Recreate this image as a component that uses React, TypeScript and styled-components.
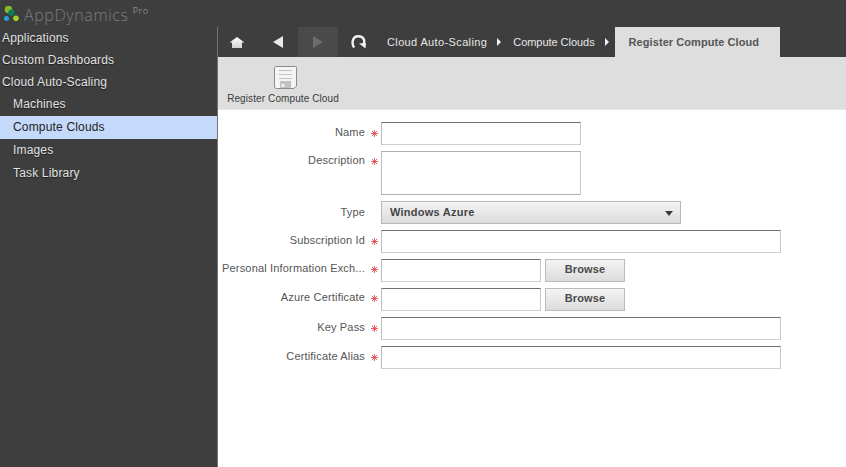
import type { ReactNode } from "react";
import styled, { createGlobalStyle } from "styled-components";

const GlobalStyle = createGlobalStyle`
  html, body {
    margin: 0;
    padding: 0;
    height: 100%;
    background: #ffffff;
  }
  #root {
    height: 100%;
  }
`;

const Page = styled.div`
  width: 846px;
  height: 467px;
  display: flex;
  flex-direction: column;
  overflow: hidden;
  font-family: "Liberation Sans", Arial, sans-serif;
  font-size: 11px;
`;

const TopBar = styled.header`
  height: 27px;
  flex-shrink: 0;
  background: #3e3e3e;
  display: flex;
  align-items: center;
  padding: 2px 0 0 4px;
  box-sizing: border-box;
`;

const LogoMarkBox = styled.span`
  display: block;
  height: 15px;
  margin-top: -3px;
`;

const LogoName = styled.span`
  margin-left: 5px;
  font-family: "Open Sans", sans-serif;
  font-weight: 300;
  font-size: 16px;
  letter-spacing: 0.6px;
  color: #7c7c7c;
`;

const LogoPro = styled.span`
  margin: -8px 0 0 4px;
  font-family: "Open Sans", sans-serif;
  font-size: 9px;
  letter-spacing: 0.5px;
  color: #8a8a8a;
`;

const Body = styled.div`
  flex: 1;
  display: flex;
  min-height: 0;
`;

const Sidebar = styled.nav`
  width: 217px;
  flex-shrink: 0;
  background: #3e3e3e;
  border-right: 1px solid #747474;
`;

const NavItem = styled.div<{ $child?: boolean; $selected?: boolean; $h: number }>`
  height: ${(p) => p.$h}px;
  line-height: ${(p) => p.$h}px;
  padding-left: ${(p) => (p.$child ? 13 : 2)}px;
  font-size: 12px;
  letter-spacing: 0.17px;
  color: ${(p) => (p.$selected ? "#222222" : "#e2e2e2")};
  background: ${(p) => (p.$selected ? "#c5d9fb" : "transparent")};
  text-shadow: ${(p) => (p.$selected ? "none" : "0 1px 1px rgba(0, 0, 0, 0.5)")};
`;

const Main = styled.main`
  flex: 1;
  display: flex;
  flex-direction: column;
  min-width: 0;
`;

const Crumbs = styled.div`
  height: 30px;
  flex-shrink: 0;
  background: #3e3e3e;
  display: flex;
  align-items: stretch;
`;

const NavButton = styled.div<{ $disabled?: boolean; $nudge?: number }>`
  width: 40px;
  box-sizing: border-box;
  padding-right: ${(p) => p.$nudge ?? 0}px;
  display: flex;
  align-items: center;
  justify-content: center;
  background: ${(p) => (p.$disabled ? "#4a4a4a" : "transparent")};
`;

const CrumbTrail = styled.div`
  display: flex;
  gap: 12px;
  margin-left: 9px;
  padding-right: 6px;
`;

const Crumb = styled.span<{ $spacing: number }>`
  display: flex;
  align-items: center;
  gap: 10px;
  color: #e6e6e6;
  font-size: 11px;
  letter-spacing: ${(p) => p.$spacing}px;
`;

const CrumbArrow = styled.i`
  width: 0;
  height: 0;
  border-left: 4px solid #f0f0f0;
  border-top: 4px solid transparent;
  border-bottom: 4px solid transparent;
`;

const ActiveTab = styled.div`
  width: 165px;
  background: #dedede;
  color: #555555;
  font-weight: bold;
  font-size: 11px;
  letter-spacing: 0.07px;
  display: flex;
  align-items: center;
  padding-left: 14px;
  box-sizing: border-box;
`;

const Toolbar = styled.div`
  height: 53px;
  flex-shrink: 0;
  box-sizing: border-box;
  background: #dedede;
  border-bottom: 1px solid #e8e8e8;
  padding: 9px 0 0 9px;
`;

const ToolButton = styled.div`
  width: 112px;
  display: flex;
  flex-direction: column;
  align-items: center;
  gap: 4px;
  font-size: 10px;
  letter-spacing: 0.1px;
  color: #3c3c3c;
  white-space: nowrap;
`;

const ToolIcon = styled.span`
  display: block;
  height: 23px;
  margin-left: 5px;
`;

const Form = styled.form`
  flex: 1;
  padding-top: 12px;
  display: flex;
  flex-direction: column;
  gap: 6px;
  background: #ffffff;
`;

const Row = styled.div`
  display: flex;
  align-items: flex-start;
`;

const LabelCell = styled.div<{ $top: number }>`
  width: 163px;
  flex-shrink: 0;
  box-sizing: border-box;
  margin-top: ${(p) => p.$top}px;
  padding-right: 3px;
  display: flex;
  justify-content: flex-end;
  gap: 6px;
`;

const Label = styled.label`
  white-space: nowrap;
  color: #555555;
  font-size: 11px;
  letter-spacing: 0.17px;
`;

const Required = styled.span<{ $on: boolean }>`
  width: 7px;
  height: 7px;
  flex-shrink: 0;
  margin-top: 4px;
  visibility: ${(p) => (p.$on ? "visible" : "hidden")};
  line-height: 0;
`;

const Input = styled.div<{ $w: number; $h?: number }>`
  width: ${(p) => p.$w}px;
  height: ${(p) => p.$h ?? 23}px;
  box-sizing: border-box;
  background: #ffffff;
  border: 1px solid #c8c8c8;
  border-top-color: ${(p) => (p.$h ? "#b0b0b0" : "#707070")};
  border-left-color: #bcbcbc;
  border-bottom-color: ${(p) => (p.$h ? "#b0b0b0" : "#d0d0d0")};
`;

const Select = styled.div`
  width: 300px;
  height: 23px;
  box-sizing: border-box;
  display: flex;
  align-items: center;
  justify-content: space-between;
  padding: 0 7px 1px 8px;
  border: 1px solid #b8b8b8;
  background: linear-gradient(#f4f4f4, #dcdcdc);
  color: #444444;
  font-weight: bold;
  font-size: 11px;
  letter-spacing: 0.25px;
`;

const SelectCaret = styled.i`
  width: 0;
  height: 0;
  margin-top: 2px;
  border-top: 5px solid #3c3c3c;
  border-left: 4px solid transparent;
  border-right: 4px solid transparent;
`;

const BrowseButton = styled.div`
  width: 80px;
  height: 23px;
  margin-left: 4px;
  padding-bottom: 3px;
  box-sizing: border-box;
  display: flex;
  align-items: center;
  justify-content: center;
  border: 1px solid #bcbcbc;
  background: linear-gradient(#f4f4f4, #dcdcdc);
  color: #4a4a4a;
  font-weight: bold;
  font-size: 11px;
  letter-spacing: 0.1px;
`;

const navItems = [
  { text: "Applications", h: 22 },
  { text: "Custom Dashboards", h: 22 },
  { text: "Cloud Auto-Scaling", h: 22 },
  { text: "Machines", h: 23, child: true },
  { text: "Compute Clouds", h: 23, child: true, selected: true },
  { text: "Images", h: 23, child: true },
  { text: "Task Library", h: 23, child: true },
];

const LogoMark = () => (
  <svg width="15" height="15" viewBox="0 0 15 15">
    <circle cx="4.5" cy="3.5" r="3.8" fill="#86b92e" />
    <circle cx="7.5" cy="6.8" r="3.2" fill="#0d7a58" />
    <circle cx="2.5" cy="12.5" r="2.5" fill="#2a9fd6" />
    <circle cx="12" cy="12.3" r="2.8" fill="#a4cf2e" />
  </svg>
);

const HomeIcon = () => (
  <svg width="16" height="11" viewBox="0 0 16 11">
    <defs>
      <linearGradient id="home-fill" x1="0" y1="0" x2="0" y2="1">
        <stop offset="0" stopColor="#ffffff" />
        <stop offset="1" stopColor="#cfcfcf" />
      </linearGradient>
    </defs>
    <path d="M8 0 L15.5 5.5 H13 V11 H3 V5.5 H0.5 Z" fill="url(#home-fill)" />
  </svg>
);

const BackIcon = ({ color }: { color: string }) => (
  <svg width="10" height="12" viewBox="0 0 10 12">
    <path d="M10 0 V12 L0 6 Z" fill={color} />
  </svg>
);

const ForwardIcon = ({ color }: { color: string }) => (
  <svg width="10" height="12" viewBox="0 0 10 12">
    <path d="M0 0 V12 L10 6 Z" fill={color} />
  </svg>
);

const RefreshIcon = () => (
  <svg width="15" height="14" viewBox="0 0 15 14">
    <path
      d="M3.2 12.5 C0.4 9 1 1.3 7.3 1.3 C13.2 1.3 14.4 6.5 12.2 9.5"
      fill="none"
      stroke="#f2f2f2"
      strokeWidth="2.4"
    />
    <path d="M8 8.5 L15 8 L14.5 13.5 Z" fill="#f2f2f2" />
  </svg>
);

const SaveIcon = () => (
  <svg width="23" height="23" viewBox="0 0 23 23">
    <path
      d="M1.5 0.5 H21.5 a1 1 0 0 1 1 1 V20 l-2.5 2.5 H2.5 a2 2 0 0 1 -2 -2 V1.5 a1 1 0 0 1 1 -1 Z"
      fill="#f4f4f4"
      stroke="#8c8c8c"
    />
    <path d="M5 4.5 H18 M5 8.5 H18 M5 12.5 H18" stroke="#c4c4c4" />
    <rect x="6" y="15" width="11" height="7" fill="#c2c2c2" />
    <rect x="7.5" y="18" width="3" height="3" fill="#f2f2f2" />
  </svg>
);

const RequiredMark = () => (
  <svg width="7" height="7" viewBox="0 0 7 7">
    <path
      d="M3.5 0 V7 M0 3.5 H7 M1 1 L6 6 M6 1 L1 6"
      stroke="#ee3a3e"
      strokeWidth="0.8"
      fill="none"
    />
  </svg>
);

const uploadFields = [
  { label: "Personal Information Exch...", browse: true, top: 3 },
  { label: "Azure Certificate", browse: true, top: 3 },
  { label: "Key Pass", browse: false, top: 4 },
  { label: "Certificate Alias", browse: false, top: 4 },
];

const FormRow = ({
  label,
  top = 4,
  required = true,
  children,
}: {
  label: string;
  top?: number;
  required?: boolean;
  children: ReactNode;
}) => (
  <Row>
    <LabelCell $top={top}>
      <Label>{label}</Label>
      <Required $on={required}>
        <RequiredMark />
      </Required>
    </LabelCell>
    {children}
  </Row>
);

export default function App() {
  return (
    <Page>
      <GlobalStyle />
      <TopBar>
        <LogoMarkBox>
          <LogoMark />
        </LogoMarkBox>
        <LogoName>AppDynamics</LogoName>
        <LogoPro>Pro</LogoPro>
      </TopBar>
      <Body>
        <Sidebar>
          {navItems.map((item) => (
            <NavItem
              key={item.text}
              $h={item.h}
              $child={item.child}
              $selected={item.selected}
            >
              {item.text}
            </NavItem>
          ))}
        </Sidebar>
        <Main>
          <Crumbs>
            <NavButton $nudge={2}>
              <HomeIcon />
            </NavButton>
            <NavButton>
              <BackIcon color="#e8e8e8" />
            </NavButton>
            <NavButton $disabled>
              <ForwardIcon color="#6c6c6c" />
            </NavButton>
            <NavButton>
              <RefreshIcon />
            </NavButton>
            <CrumbTrail>
              <Crumb $spacing={0.37}>
                Cloud Auto-Scaling
                <CrumbArrow />
              </Crumb>
              <Crumb $spacing={-0.04}>
                Compute Clouds
                <CrumbArrow />
              </Crumb>
            </CrumbTrail>
            <ActiveTab>Register Compute Cloud</ActiveTab>
          </Crumbs>
          <Toolbar>
            <ToolButton>
              <ToolIcon>
                <SaveIcon />
              </ToolIcon>
              Register Compute Cloud
            </ToolButton>
          </Toolbar>
          <Form>
            <FormRow label="Name">
              <Input $w={200} />
            </FormRow>
            <FormRow label="Description" top={3}>
              <Input $w={200} $h={44} />
            </FormRow>
            <FormRow label="Type" top={5} required={false}>
              <Select>
                Windows Azure
                <SelectCaret />
              </Select>
            </FormRow>
            <FormRow label="Subscription Id">
              <Input $w={400} />
            </FormRow>
            {uploadFields.map((f) => (
              <FormRow key={f.label} label={f.label} top={f.top}>
                <Input $w={f.browse ? 160 : 400} />
                {f.browse && <BrowseButton>Browse</BrowseButton>}
              </FormRow>
            ))}
          </Form>
        </Main>
      </Body>
    </Page>
  );
}
